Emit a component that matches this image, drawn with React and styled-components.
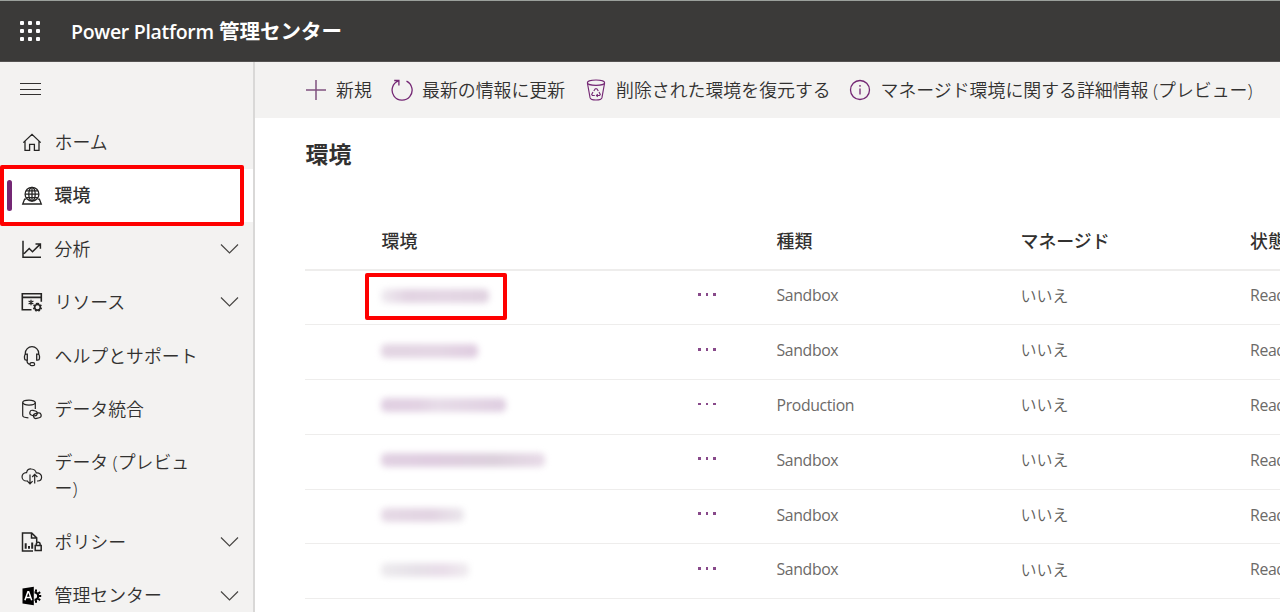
import React from "react";
import styled, { createGlobalStyle } from "styled-components";

const GlobalStyle = createGlobalStyle`
  * { box-sizing: border-box; }
  html, body { margin: 0; height: 612px; overflow: hidden; }
  body {
    background: #fff;
    color: #323130;
    font-family: "Open Sans", "Noto Sans CJK JP", sans-serif;
    font-size: 17.9px;
  }
`;

const Page = styled.div`
  display: flex;
  flex-direction: column;
  width: 1280px;
  height: 612px;
  overflow: hidden;
`;

const Header = styled.header`
  flex: none;
  display: flex;
  align-items: center;
  height: 62px;
  padding-left: 19px;
  background: #3b3a39;
  border-top: 1px solid #9ba09c;
  border-bottom: 1px solid #555352;
`;

const Brand = styled.div`
  margin: -2px 0 0 30px;
  color: #fff;
  font-size: 20.5px;
  font-weight: 700;
  white-space: nowrap;
`;

const BrandLatin = styled.span`
  display: inline-block;
  width: 148px;
  font-size: 19.5px;
  font-weight: 600;
  letter-spacing: -0.3px;
`;

const Body = styled.div`
  flex: 1;
  display: flex;
  min-height: 0;
`;

const Sidebar = styled.nav`
  flex: none;
  width: 255px;
  background: #f3f2f1;
  border-right: 2px solid #d9d8d7;
`;

const MenuRow = styled.div`
  display: flex;
  align-items: center;
  height: 53.5px;
  padding-left: 20px;
`;

const NavItem = styled.div`
  position: relative;
  display: flex;
  align-items: center;
  height: ${(p) => (p.$tall ? "79.6px" : "53.4px")};
  padding: 0 14px 0 20px;
  background: ${(p) => (p.$active ? "#fff" : "transparent")};
  font-weight: ${(p) => (p.$active ? 500 : 350)};
  line-height: 26px;
`;

const NavIcon = styled.span`
  display: flex;
  width: 24px;
  height: 24px;
  margin-right: 10.5px;
`;

const NavLabel = styled.span`
  flex: 1;
  margin-top: -0.5px;
  white-space: nowrap;
`;

const ActiveBar = styled.span`
  position: absolute;
  left: 6.5px;
  top: 11px;
  width: 5px;
  height: 31px;
  border-radius: 2.5px;
  background: #742774;
`;

const Highlight = styled.span`
  position: absolute;
  left: ${(p) => p.$x}px;
  top: ${(p) => p.$y}px;
  width: ${(p) => p.$w}px;
  height: ${(p) => p.$h}px;
  border: 4px solid #fe0000;
  border-radius: 2px;
  z-index: 1;
`;

const Main = styled.main`
  flex: 1;
  min-width: 0;
  background: #fff;
`;

const Toolbar = styled.div`
  display: flex;
  align-items: center;
  height: 56px;
  padding: 0 0 1px 50px;
  background: #f3f2f1;
`;

const Command = styled.div`
  flex: none;
  display: flex;
  align-items: center;
  width: ${(p) => p.$w}px;
  font-weight: 350;
  white-space: nowrap;
`;

const CommandIcon = styled.span`
  flex: none;
  display: flex;
  width: 22px;
  margin-right: ${(p) => p.$gap}px;
`;

const CommandLabel = styled.span`
  padding-bottom: 2px;
`;

const Title = styled.h1`
  margin: 0;
  height: 95px;
  padding: 21px 0 0 50.5px;
  font-size: 22.9px;
  line-height: 32px;
  font-weight: 700;
`;

const Table = styled.div`
  margin-left: 50px;
`;

const Row = styled.div`
  position: relative;
  display: grid;
  grid-template-columns: 316.5px 78.5px 244px 229.5px 157px;
  align-items: center;
  height: 54.8px;
  padding: 0 0 4px 76.5px;
  border-bottom: 1px solid #eeedec;
  color: #605e5c;
  font-size: 16px;
  font-weight: 350;
  white-space: nowrap;
`;

const HeadRow = styled(Row)`
  height: 57.5px;
  padding-bottom: 2px;
  border-bottom: 2px solid #eeedec;
  color: #323130;
  font-size: 17.9px;
  font-weight: 500;
`;

const Kana = styled.span`
  padding-bottom: 1.5px;
`;

const Latin = styled.span`
  color: #6c6a68;
  font-weight: 400;
  letter-spacing: -0.35px;
  font-size: 15.8px;
`;

const Redacted = styled.span`
  width: ${(p) => p.$w}px;
  height: 14px;
  margin: 1px 0 0 -1px;
  border-radius: 5px;
  background: ${(p) => p.$tint};
  filter: blur(3px);
`;

const Dots = styled.span`
  display: flex;
  gap: 5px;
  margin-top: -2px;
`;

const Dot = styled.i`
  width: 2.7px;
  height: 2.7px;
  background: #88498a;
`;

const Icon = ({ size = 22, color = "#252423", sw = 1.3, box = 24, children }) => (
  <svg width={size} height={size} viewBox={`0 0 ${box} ${box}`} fill="none" stroke={color} strokeWidth={sw}>
    {children}
  </svg>
);

const NavGlyph = ({ children, sw }) => (
  <Icon size={24} sw={sw}>{children}</Icon>
);

const icons = {
  home: (
    <NavGlyph>
      <path d="M3.3 12.6 12 4.3l8.7 8.3M5 11v9.3h4.6v-6h4.8v6H19V11" />
    </NavGlyph>
  ),
  globe: (
    <NavGlyph sw={1.3}>
      <circle cx="12" cy="10.2" r="6.9" />
      <ellipse cx="12" cy="10.2" rx="3.2" ry="6.9" />
      <path d="M12 3.3v13.8M5.1 10.2h13.8M6.1 6.8h11.8M6.1 13.6h11.800M6.100 15.200H4.600L2.700 20h18.600l-1.900-4.800h-1.500" />
    </NavGlyph>
  ),
  analytics: (
    <NavGlyph sw={1.5}>
      <path d="M3 3.7v16.5h18M4 16.8l5.2-5.3 3.3 3.3 7.2-7.2M15.5 7h4.9v4.8" />
    </NavGlyph>
  ),
  resources: (
    <NavGlyph sw={1.6}>
      <path d="M11.5 19.7H2.3V3.8h19v8M2.3 7.4h19" />
      <circle cx="17.5" cy="17.3" r="2.8" />
      <path strokeDasharray="1.6 1.5" d="M17.5 13.5a3.8 3.8 0 1 1-.01 0" />
      <path strokeWidth="1.2" d="M11 9.7v5.6M8.6 11.1l4.8 2.8M13.4 11.1l-4.8 2.8" />
    </NavGlyph>
  ),
  support: (
    <NavGlyph>
      <path d="M5.3 10.2V9.4a6.7 6.7 0 0 1 13.4 0v.8M7.3 10.2v6H6.4a2 2 0 0 1-1.9-2v-2a2 2 0 0 1 1.9-2ZM16.7 10.2v6h.9a2 2 0 0 0 1.9-2v-2a2 2 0 0 0-1.9-2ZM7 16.4c0 2.2 1 3.5 3 3.7" />
      <rect x="10" y="18.7" width="4.6" height="3" rx="1.5" />
    </NavGlyph>
  ),
  data: (
    <NavGlyph sw={1.2}>
      <ellipse cx="9" cy="5.6" rx="6.3" ry="2.5" />
      <path d="M2.7 5.6v13c0 1.2 2.3 2.1 5.7 2.3M15.3 5.6v6.3" />
      <rect x="9.8" y="13.6" width="7.5" height="5" rx="2.5" transform="rotate(14 13.5 16)" />
      <rect x="13.4" y="16.2" width="7.8" height="5" rx="2.5" transform="rotate(-14 17.2 18.7)" />
    </NavGlyph>
  ),
  cloud: (
    <NavGlyph sw={1.2}>
      <path d="M8 17H6.4a4.2 4.2 0 0 1-.3-8.4h.5C7.1 6 9.4 4.800 11.400 5c2.700.2 4.400 1.800 4.900 4 3-.3 5.400 1.400 5.300 4 0 2.400-1.600 4-3.900 4H17" />
      <path d="M10 10.5v9.2M7.4 17.2l2.6 2.7 2.6-2.7M14.7 19.5v-9M12.2 13l2.5-2.7 2.7 2.7" />
    </NavGlyph>
  ),
  policy: (
    <NavGlyph sw={1.5}>
      <path d="M13 20.9H2.5v-18h9.200l5 5v4.500M11.500 3v5h5" />
      <path strokeWidth="2" d="M5.7 18.8v-5.5M9 18.8v-2.9M12.2 18.8v-6.3" />
      <path d="M15.2 15.4h6v5.2h-6zM16.3 15.2v-1a1.9 1.9 0 0 1 3.8 0v1" />
    </NavGlyph>
  ),
  admin: (
    <NavGlyph>
      <path fill="#000" stroke="none" d="M2.5 4.5 13.8 2.8v18.5L2.5 19.5Z" />
      <path stroke="#fff" strokeWidth="1.5" d="m4.9 16.2 3-8.5h.8l3 8.5M6.2 13.4h4.2" />
      <path stroke="#000" strokeWidth="2.2" d="M14.5 8.4a3.7 3.7 0 0 1 0 7.4" />
      <path stroke="#000" strokeWidth="2" d="M16 7.8V5.5M18.2 9.5l2-1.4M18.6 12h2.6M18.2 14.7l2 1.4M16 16.2v2.5" />
    </NavGlyph>
  ),
};

const PURPLE = "#742774";

const commandIcons = {
  plus: <Icon color="#80517f" sw={1.5} box={22}><path d="M11 1v20M1 11h20" /></Icon>,
  refresh: (
    <Icon color={PURPLE} box={22}>
      <path d="M15.5 2.2A10 10 0 1 1 7.4 1.9M3.2 1.5h4.7v5" />
    </Icon>
  ),
  bin: (
    <Icon color={PURPLE} sw={1.15} box={22}>
      <ellipse cx="11" cy="3.7" rx="8.6" ry="2.7" />
      <path d="m2.4 4 2.700 14.900c.7 2.800 11.100 2.800 11.800 0L19.600 4" />
      <path d="m8.800 12 1.500-2.300h1.500l1.500 2.300M8 13l-1.300 2.500.7 1h2.400M14 13l1.300 2.500-.7 1h-3M12.700 15.200l-1.200 1.300 1.200 1.300" />
    </Icon>
  ),
  info: (
    <Icon color={PURPLE} box={22}>
      <circle cx="11" cy="11" r="9.5" />
      <path d="M11 9.4v6.2M11 6.1v1.6" />
    </Icon>
  ),
};

const Chevron = () => (
  <svg width="19" height="12" viewBox="0 0 19 12" fill="none" stroke="#484644" strokeWidth="1.2">
    <path d="m1 1.5 8.500 8.500L18 1.500" />
  </svg>
);

const nav = [
  { icon: "home", label: "ホーム" },
  { icon: "globe", label: "環境", active: true },
  { icon: "analytics", label: "分析", expand: true },
  { icon: "resources", label: "リソース", expand: true },
  { icon: "support", label: "ヘルプとサポート" },
  { icon: "data", label: "データ統合" },
  { icon: "cloud", label: <>データ (プレビュ<br />ー)</>, tall: true },
  { icon: "policy", label: "ポリシー", expand: true },
  { icon: "admin", label: "管理センター", expand: true },
];

const commands = [
  { icon: "plus", label: "新規", w: 86, gap: 9 },
  { icon: "refresh", label: "最新の情報に更新", w: 194, gap: 9 },
  { icon: "bin", label: "削除された環境を復元する", w: 264, gap: 9 },
  { icon: "info", label: "マネージド環境に関する詳細情報 (プレビュー)", w: 420, gap: 9.5 },
];

const rows = [
  { w: 108, type: "Sandbox", tint: "linear-gradient(90deg, #efebf0, #e2d3e2 25%, #e4d6e4 60%, #e0d2e0)" },
  { w: 97, type: "Sandbox", tint: "linear-gradient(90deg, #e3d5e3, #e4d6e4 60%, #dfcce0)" },
  { w: 125, type: "Production", tint: "linear-gradient(90deg, #e0cfe2, #e2d2e3 30%, #e7dce8 45%, #dfcee1)" },
  { w: 164, type: "Sandbox", tint: "linear-gradient(90deg, #e1d1e2, #dfcde0 30%, #dcd0dc 70%, #e8dbe8)" },
  { w: 83, type: "Sandbox", tint: "linear-gradient(90deg, #e6dae6, #e2d3e2 60%, #ebe7ec)" },
  { w: 88, type: "Sandbox", tint: "linear-gradient(90deg, #edebee, #e6e1e8 40%, #e9dde9 70%, #f0edf0)" },
];

export default function App() {
  return (
    <Page>
      <GlobalStyle />
      <Header>
        <svg width="22" height="22" viewBox="0 0 22 22" fill="#fff">
          {[1, 9, 17].map((y) => [1, 9, 17].map((x) => <rect key={`${x}-${y}`} x={x} y={y} width="4" height="4" rx="1" />))}
        </svg>
        <Brand><BrandLatin>Power Platform</BrandLatin>管理センター</Brand>
      </Header>
      <Body>
        <Sidebar>
          <MenuRow>
            <svg width="21" height="14" viewBox="0 0 21 14" stroke="#323130" strokeWidth="1.2">
              <path d="M0 1.5h21M0 7.5h21M0 12.5h21" />
            </svg>
          </MenuRow>
          {nav.map((n) => (
            <NavItem key={n.icon} $active={n.active} $tall={n.tall}>
              {n.active && <ActiveBar />}
              {n.active && <Highlight $x={0} $y={-4} $w={244} $h={61} />}
              <NavIcon>{icons[n.icon]}</NavIcon>
              <NavLabel>{n.label}</NavLabel>
              {n.expand && <Chevron />}
            </NavItem>
          ))}
        </Sidebar>
        <Main>
          <Toolbar>
            {commands.map((c) => (
              <Command key={c.icon} $w={c.w}>
                <CommandIcon $gap={c.gap}>{commandIcons[c.icon]}</CommandIcon>
                <CommandLabel>{c.label}</CommandLabel>
              </Command>
            ))}
          </Toolbar>
          <Title>環境</Title>
          <Table>
            <HeadRow>
              <span>環境</span>
              <span />
              <span>種類</span>
              <span>マネージド</span>
              <span>状態</span>
            </HeadRow>
            {rows.map((r, i) => (
              <Row key={i}>
                {i === 0 && <Highlight $x={60} $y={2.5} $w={142} $h={47} />}
                <Redacted $w={r.w} $tint={r.tint} />
                <Dots><Dot /><Dot /><Dot /></Dots>
                <Latin>{r.type}</Latin>
                <Kana>いいえ</Kana>
                <Latin>Ready</Latin>
              </Row>
            ))}
          </Table>
        </Main>
      </Body>
    </Page>
  );
}
